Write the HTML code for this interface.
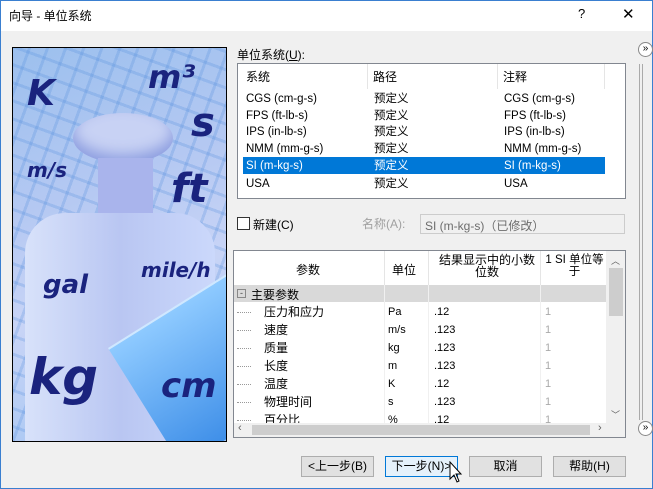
<!DOCTYPE html>
<html><head><meta charset="utf-8"><style>
*{box-sizing:border-box;margin:0;padding:0}
body{width:653px;height:489px;overflow:hidden;background:#f0f0f0;font-family:"Liberation Sans","Noto Sans CJK SC",sans-serif;font-size:12px;color:#000;position:relative}
.abs{position:absolute}
.win{position:absolute;left:0;top:0;width:653px;height:489px;border:1px solid #3a7fd0}
.title{position:absolute;left:1px;top:1px;width:651px;height:30px;background:#fff}
.list{left:237px;top:63px;width:389px;height:136px;background:#fff;border:1px solid #828790}
.lt{position:absolute;white-space:nowrap;font-size:11.5px;line-height:14px;height:14px}
.btn{position:absolute;top:456px;height:21px;background:#e1e1e1;border:1px solid #adadad;text-align:center;line-height:19px;font-size:12px}
.grid{left:233px;top:250px;width:393px;height:188px;background:#fff;border:1px solid #828790;overflow:hidden}
.row{position:absolute;left:0;width:372px;height:18px;font-size:12px}
.row span{position:absolute;top:2px;white-space:nowrap;line-height:14px}
.dot{position:absolute;left:3px;top:9px;width:14px;border-top:1px dotted #999}
</style></head><body>
<div class="win"></div>
<div class="title"></div>
<div class="abs" style="left:9px;top:7px;font-size:12px">向导 - 单位系统</div>
<div class="abs" style="left:578px;top:6px;font-size:13px">?</div>
<div class="abs" style="left:622px;top:5px;font-size:15px">✕</div>

<!-- image -->
<div class="abs" style="left:12px;top:47px;width:215px;height:395px;border:1px solid #000;overflow:hidden;background:linear-gradient(160deg,#9cc0ee 0%,#b4c8f2 35%,#c8d4f6 60%,#9fc4f2 100%)">
<div class="abs" style="left:0;top:0;width:215px;height:395px;background-image:repeating-linear-gradient(20deg,transparent 0 14px,rgba(80,140,220,.25) 14px 17px),repeating-linear-gradient(110deg,transparent 0 14px,rgba(80,140,220,.25) 14px 17px)"></div>
<div class="abs" style="left:60px;top:65px;width:100px;height:50px;border-radius:50%;background:#c8d2f4;box-shadow:inset 0 -8px 14px #8d9ee0"></div>
<div class="abs" style="left:85px;top:110px;width:55px;height:60px;background:#a9b4ec"></div>
<div class="abs" style="left:12px;top:165px;width:190px;height:230px;border-radius:40px 40px 0 0;background:linear-gradient(90deg,#d8e2fa,#b9c6f2 50%,#cbd8fb)"></div>
<div class="abs" style="left:95px;top:300px;width:200px;height:140px;background:linear-gradient(180deg,#8ecaff,#3f8fe8);transform:rotate(-32deg);transform-origin:0 0;border-top:2px solid #cfe8ff"></div>
<div class="abs" style="font:italic bold 36px 'DejaVu Sans',sans-serif;color:#1a237e;left:14px;top:25px">K</div>
<div class="abs" style="font:italic bold 32px 'DejaVu Sans',sans-serif;color:#1a237e;left:135px;top:10px">m³</div>
<div class="abs" style="font:italic bold 40px 'DejaVu Sans',sans-serif;color:#1a237e;left:178px;top:52px">s</div>
<div class="abs" style="font:italic bold 20px 'DejaVu Sans',sans-serif;color:#1a237e;left:14px;top:110px">m/s</div>
<div class="abs" style="font:italic bold 40px 'DejaVu Sans',sans-serif;color:#1a237e;left:158px;top:118px">ft</div>
<div class="abs" style="font:italic bold 20px 'DejaVu Sans',sans-serif;color:#1a237e;left:128px;top:210px">mile/h</div>
<div class="abs" style="font:italic bold 26px 'DejaVu Sans',sans-serif;color:#1a237e;left:30px;top:222px">gal</div>
<div class="abs" style="font:italic bold 50px 'DejaVu Sans',sans-serif;color:#1a237e;left:16px;top:300px">kg</div>
<div class="abs" style="font:italic bold 34px 'DejaVu Sans',sans-serif;color:#1a237e;left:148px;top:318px">cm</div>
</div>

<div class="abs" style="left:237px;top:46px">单位系统(<u>U</u>):</div>
<div class="abs list">
<div class="abs" style="left:129px;top:0;height:25px;border-left:1px solid #e5e5e5"></div>
<div class="abs" style="left:259px;top:0;height:25px;border-left:1px solid #e5e5e5"></div>
<div class="abs" style="left:366px;top:0;height:25px;border-left:1px solid #e5e5e5"></div>
<div class="lt" style="left:8px;top:6px;font-size:12px">系统</div>
<div class="lt" style="left:135px;top:6px;font-size:12px">路径</div>
<div class="lt" style="left:265px;top:6px;font-size:12px">注释</div>
<div class="abs" style="left:5px;top:93px;width:362px;height:17px;background:#0078d7"></div>
<div class="lt" style="left:8px;top:28px">CGS (cm-g-s)</div><div class="lt" style="left:136px;top:28px">预定义</div><div class="lt" style="left:266px;top:28px">CGS (cm-g-s)</div>
<div class="lt" style="left:8px;top:45px">FPS (ft-lb-s)</div><div class="lt" style="left:136px;top:45px">预定义</div><div class="lt" style="left:266px;top:45px">FPS (ft-lb-s)</div>
<div class="lt" style="left:8px;top:61px">IPS (in-lb-s)</div><div class="lt" style="left:136px;top:61px">预定义</div><div class="lt" style="left:266px;top:61px">IPS (in-lb-s)</div>
<div class="lt" style="left:8px;top:78px">NMM (mm-g-s)</div><div class="lt" style="left:136px;top:78px">预定义</div><div class="lt" style="left:266px;top:78px">NMM (mm-g-s)</div>
<div class="lt" style="left:8px;top:95px;color:#fff">SI (m-kg-s)</div><div class="lt" style="left:136px;top:95px;color:#fff">预定义</div><div class="lt" style="left:266px;top:95px;color:#fff">SI (m-kg-s)</div>
<div class="lt" style="left:8px;top:113px">USA</div><div class="lt" style="left:136px;top:113px">预定义</div><div class="lt" style="left:266px;top:113px">USA</div>
</div>

<div class="abs" style="left:237px;top:217px;width:13px;height:13px;border:1px solid #333;background:#fff"></div>
<div class="abs" style="left:253px;top:216px">新建(C)</div>
<div class="abs" style="left:362px;top:215px;color:#a0a0a0">名称(A):</div>
<div class="abs" style="left:420px;top:214px;width:205px;height:20px;border:1px solid #ccc;background:#f0f0f0;color:#6d6d6d;padding:2px 4px">SI (m-kg-s)（已修改）</div>

<div class="abs grid">
<div class="abs" style="left:150px;top:0;height:34px;border-left:1px solid #e5e5e5"></div>
<div class="abs" style="left:194px;top:0;height:34px;border-left:1px solid #e5e5e5"></div>
<div class="abs" style="left:306px;top:0;height:34px;border-left:1px solid #e5e5e5"></div>
<div class="abs" style="left:62px;top:10px">参数</div>
<div class="abs" style="left:158px;top:10px">单位</div>
<div class="abs" style="left:200px;top:3px;width:106px;text-align:center;line-height:12px">结果显示中的小数<br>位数</div>
<div class="abs" style="left:309px;top:3px;width:63px;text-align:center;line-height:12px;font-size:11.5px">1 SI 单位等<br>于</div>
<div class="abs" style="left:0;top:34px;width:372px;height:17px;background:#d9d9d9"></div>
<div class="abs" style="left:150px;top:34px;height:140px;border-left:1px solid #f0f0f0"></div>
<div class="abs" style="left:194px;top:34px;height:140px;border-left:1px solid #f0f0f0"></div>
<div class="abs" style="left:306px;top:34px;height:140px;border-left:1px solid #f0f0f0"></div>
<div class="abs" style="left:3px;top:38px;width:9px;height:9px;border:1px solid #888;font-size:9px;line-height:6px;text-align:center;color:#444">-</div>
<div class="abs" style="left:17px;top:35px">主要参数</div>
<div class="row" style="top:52px"><i class="dot"></i><span style="left:30px">压力和应力</span><span style="left:154px;font-size:11px">Pa</span><span style="left:200px;font-size:11px">.12</span><span style="left:311px;color:#aaa;font-size:11px">1</span></div>
<div class="row" style="top:70px"><i class="dot"></i><span style="left:30px">速度</span><span style="left:154px;font-size:11px">m/s</span><span style="left:200px;font-size:11px">.123</span><span style="left:311px;color:#aaa;font-size:11px">1</span></div>
<div class="row" style="top:88px"><i class="dot"></i><span style="left:30px">质量</span><span style="left:154px;font-size:11px">kg</span><span style="left:200px;font-size:11px">.123</span><span style="left:311px;color:#aaa;font-size:11px">1</span></div>
<div class="row" style="top:106px"><i class="dot"></i><span style="left:30px">长度</span><span style="left:154px;font-size:11px">m</span><span style="left:200px;font-size:11px">.123</span><span style="left:311px;color:#aaa;font-size:11px">1</span></div>
<div class="row" style="top:124px"><i class="dot"></i><span style="left:30px">温度</span><span style="left:154px;font-size:11px">K</span><span style="left:200px;font-size:11px">.12</span><span style="left:311px;color:#aaa;font-size:11px">1</span></div>
<div class="row" style="top:142px"><i class="dot"></i><span style="left:30px">物理时间</span><span style="left:154px;font-size:11px">s</span><span style="left:200px;font-size:11px">.123</span><span style="left:311px;color:#aaa;font-size:11px">1</span></div>
<div class="row" style="top:160px"><i class="dot"></i><span style="left:30px">百分比</span><span style="left:154px;font-size:11px">%</span><span style="left:200px;font-size:11px">.12</span><span style="left:311px;color:#aaa;font-size:11px">1</span></div>
<div class="abs" style="left:372px;top:0;width:19px;height:172px;background:#f0f0f0"></div>
<div class="abs" style="left:375px;top:17px;width:14px;height:48px;background:#cdcdcd"></div>
<div class="abs" style="left:377px;top:3px;font-size:9px;color:#606060">︿</div>
<div class="abs" style="left:377px;top:157px;font-size:9px;color:#606060">﹀</div>
<div class="abs" style="left:0;top:172px;width:391px;height:14px;background:#f0f0f0"></div>
<div class="abs" style="left:18px;top:174px;width:338px;height:10px;background:#cdcdcd"></div>
<div class="abs" style="left:4px;top:171px;font-size:11px;color:#606060">‹</div>
<div class="abs" style="left:364px;top:171px;font-size:11px;color:#606060">›</div>
</div>

<div class="abs" style="left:639px;top:64px;width:4px;height:356px;border-left:1px solid #aaa;border-right:1px solid #aaa"></div>
<div class="abs" style="left:638px;top:42px;width:15px;height:15px;border:1px solid #888;border-radius:50%;background:#fff;font-size:10px;line-height:12px;text-align:center">»</div>
<div class="abs" style="left:638px;top:421px;width:15px;height:15px;border:1px solid #888;border-radius:50%;background:#fff;font-size:10px;line-height:12px;text-align:center">»</div>

<div class="btn" style="left:301px;width:73px">&lt;上一步(B)</div>
<div class="btn" style="left:385px;width:73px;border-color:#0078d7;background:#e5f1fb">下一步(N)&gt;</div>
<div class="btn" style="left:469px;width:73px">取消</div>
<div class="btn" style="left:553px;width:73px">帮助(H)</div>
<svg class="abs" style="left:449px;top:461px" width="14" height="24" viewBox="0 0 14 24"><path d="M1 1 L1 18 L5 14 L8 21 L10 20 L7 13 L12 13 Z" fill="#fff" stroke="#000"/></svg>
</body></html>
